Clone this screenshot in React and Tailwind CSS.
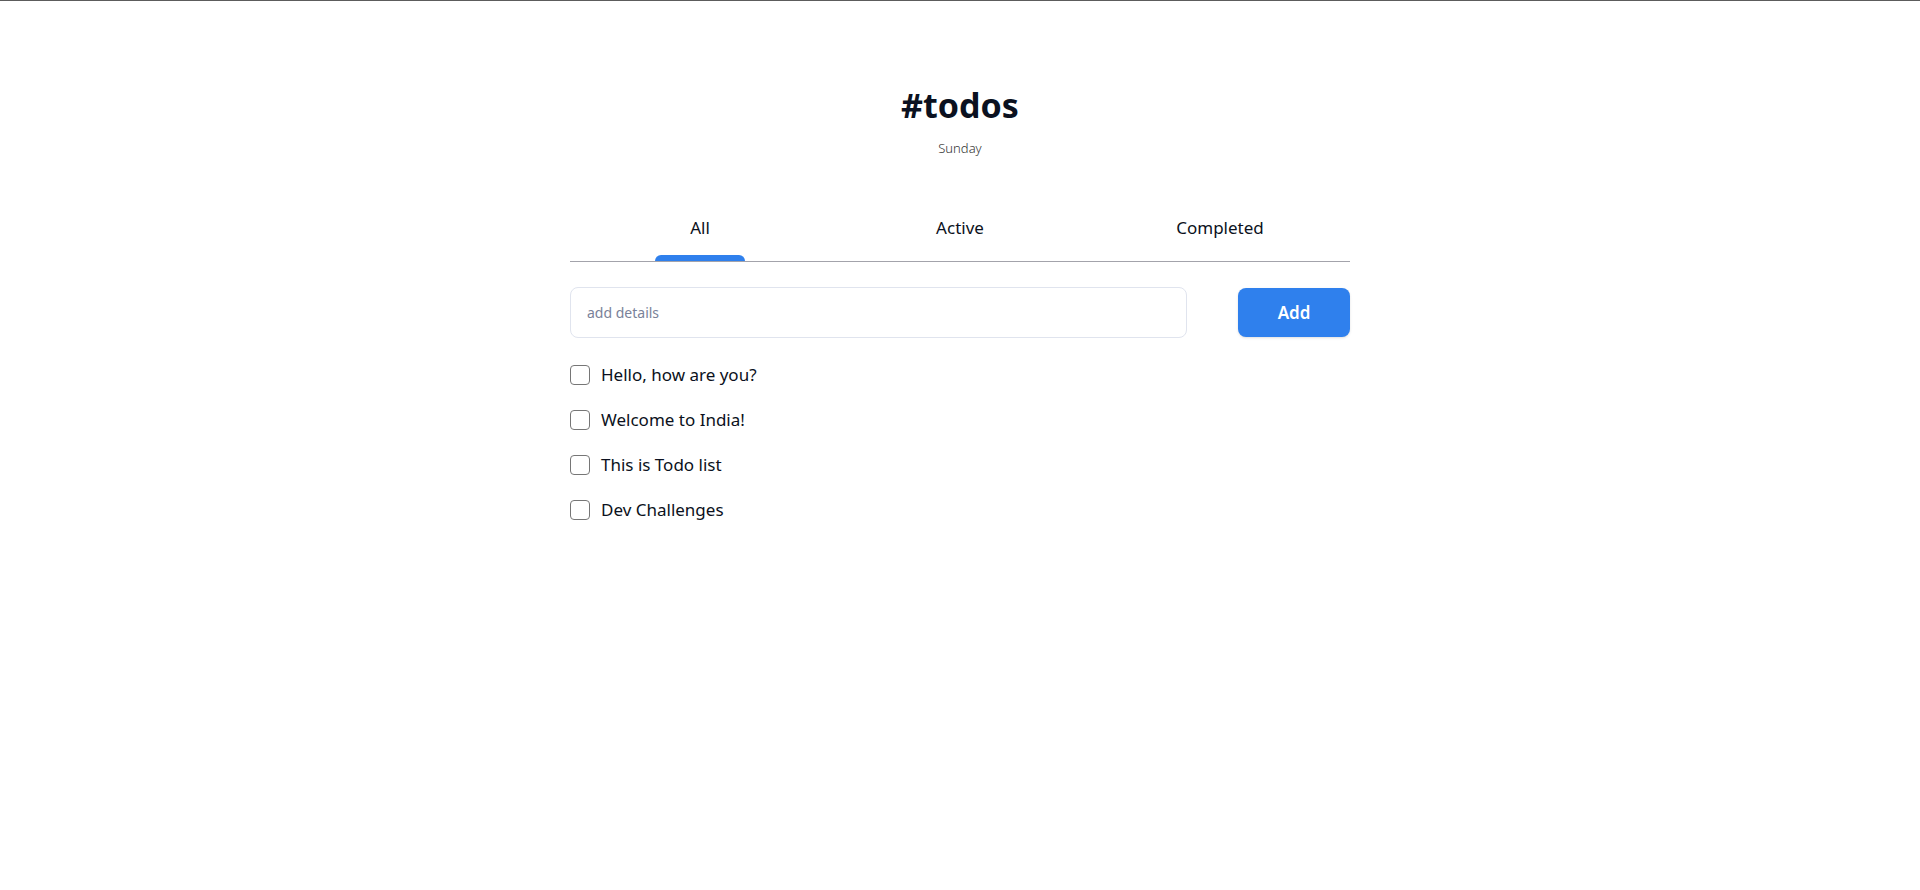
const todos = ["Hello, how are you?", "Welcome to India!", "This is Todo list", "Dev Challenges"];
const tabs = ["All", "Active", "Completed"];

export default function App() {
  return (
    <div className="min-h-screen bg-white border-t border-[#5c5c5c] font-['Noto_Sans',sans-serif] text-[#0b1120]">
      <main className="mx-auto w-[780px] pt-[84px]">
        <h1 className="text-center text-[34px] font-bold leading-[40px]">#todos</h1>
        <p className="mt-[15px] text-center text-[13px] font-light leading-[16px] text-[#333]">Sunday</p>

        <div className="mt-[60px] grid grid-cols-3 border-b border-[#a3a3ab]">
          {tabs.map((t, i) => (
            <button key={t} className="flex flex-col items-center text-[17px] font-normal leading-[24px]">
              <span>{t}</span>
              <span className={`mt-[15px] h-[6px] w-[90px] rounded-t-[6px] ${i === 0 ? "bg-[#2f80ed]" : "bg-transparent"}`} />
            </button>
          ))}
        </div>

        <div className="mt-[25px] flex items-center gap-[51px]">
          <input
            placeholder="add details"
            className="h-[51px] flex-1 rounded-[8px] border border-[#e0e4ee] px-4 text-[14px] placeholder:text-[#7a8299] outline-none"
          />
          <button className="h-[49px] w-[112px] rounded-[8px] bg-[#2f80ed] text-[17px] font-semibold text-white shadow-sm">
            Add
          </button>
        </div>

        <ul className="mt-[25px] flex flex-col gap-[21px]">
          {todos.map((t) => (
            <li key={t} className="flex items-center gap-[11px]">
              <input type="checkbox" className="h-[20px] w-[20px] appearance-none rounded-[4px] border border-[#767676] bg-white" />
              <span className="text-[17px] font-normal leading-[24px]">{t}</span>
            </li>
          ))}
        </ul>
      </main>
    </div>
  );
}
